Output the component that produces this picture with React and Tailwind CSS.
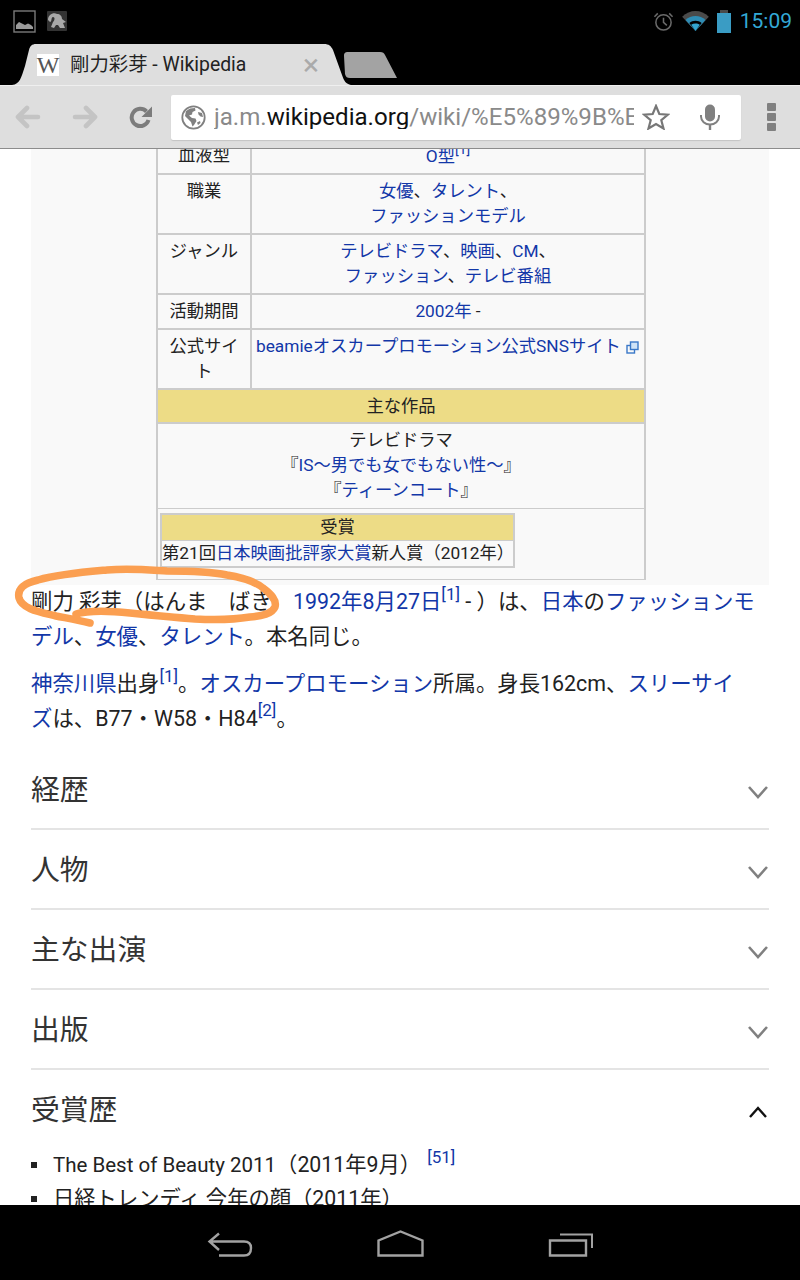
const FONT = '"Roboto", "Noto Sans CJK JP", sans-serif';

const L = ({ children }) => <span className="text-[#1237a8]">{children}</span>;

const Ref = ({ n }) => (
  <sup className="text-[#1237a8] text-[0.8em] leading-none align-[0.55em] relative top-0">[{n}]</sup>
);

const PictureIcon = () => (
  <svg width="23" height="23" viewBox="0 0 23 23" className="shrink-0">
    <rect x="1" y="1" width="21" height="21" fill="none" stroke="#7a7a7a" strokeWidth="1.4" />
    <path d="M3 19 L3 15 L6 12 L9 13.5 L12 15 L15 13.5 L18 15 L20 17 L20 19 Z" fill="#9a9a9a" />
  </svg>
);

const BlobIcon = () => (
  <svg width="20" height="20" viewBox="0 0 20 20" className="shrink-0">
    <rect width="20" height="20" rx="1" fill="#333333" />
    <path d="M1 9 C1 3 7 1 10 3 C13 3 15 5 15 8 L19 11 L16 12 L18 17 L13 17 L11 14 L9 14 L7 17 L4 16 L6 11 C8 9 8 6 6 6 C4 6 5 11 3 11 Z" fill="#a8a8a8" />
  </svg>
);

const AlarmIcon = () => (
  <svg width="21" height="21" viewBox="0 0 22 22" fill="none" stroke="#6a6a6a" strokeWidth="1.6" className="shrink-0">
    <circle cx="11" cy="12" r="8" />
    <path d="M11 7 V12 L14.5 15" />
    <path d="M1.5 6 L5 2.5 M20.5 6 L17 2.5" />
  </svg>
);

const WifiIcon = () => (
  <svg width="27" height="20" viewBox="0 0 28 21" className="shrink-0">
    <path d="M0 6 C8 -2 20 -2 28 6 L14 21 Z" fill="#4a4a4a" />
    <path d="M3.5 9.5 C9 4 19 4 24.500 9.500 L14 21 Z" fill="#2f8db5" />
    <path d="M7.500 12.500 C11 9.500 17 9.500 20.500 12.500 L14 21 Z" fill="#000000" />
    <path d="M9.500 14.500 C12 12.800 16 12.800 18.500 14.500 L14 21 Z" fill="#33a5d0" />
  </svg>
);

const BatteryIcon = () => (
  <div className="flex flex-col items-center shrink-0">
    <div className="w-[8px] h-[3px] bg-[#4a4a4a]" />
    <div className="w-[14px] h-[20px] bg-[#3a9cc4]" />
  </div>
);

const TabShape = () => (
  <svg className="absolute left-0 top-0" width="400" height="43" viewBox="0 0 400 43">
    <path d="M12 43 C20 42 21 36 25 24 L29 8 C30 4 32 2 36 2 L324 2 C329 2 331 4 333 8 L342 33 C344 39 346 42 351 43 Z" fill="#dedede" />
    <path d="M344 14 C344 11 345 10 348 10 L380 10 C383 10 384 11 385 13 L397 36 L350 36 C347 36 346 35 345 32 Z" fill="#a3a3a3" />
  </svg>
);

const Arrow = ({ flip, color }) => (
  <svg width="26" height="24" viewBox="0 0 26 24" fill="none" stroke={color} strokeWidth="4.6" strokeLinecap="round" strokeLinejoin="round" className={flip ? 'rotate-180' : ''}>
    <path d="M3 12 H23 M12 3 L3 12 L12 21" />
  </svg>
);

const ReloadIcon = () => (
  <svg width="24" height="24" viewBox="0 0 24 24" fill="none">
    <path d="M19.500 15 A8.600 8.600 0 1 1 17.500 6.500" stroke="#7c7c7c" strokeWidth="4" />
    <path d="M23 1.500 V12 H12.500 Z" fill="#7c7c7c" />
  </svg>
);

const GlobeIcon = () => (
  <svg width="25" height="25" viewBox="0 0 25 25" className="shrink-0">
    <circle cx="12.500" cy="12.500" r="11.200" fill="none" stroke="#808080" strokeWidth="1.8" />
    <path d="M5 6 L9 3.500 L14 3 L14.500 5.500 L11.500 7 L11 9.500 L8 10.500 L11 13 L14.500 13.500 L15.500 16 L13 20 L11.500 21.500 L10 17 L7 14 L4 11 Z" fill="#808080" />
    <path d="M17 7 L21 8 L22 12 L19.500 11.500 L17.500 9.500 Z M16 17.500 L19 16 L19.500 18 L17 20 Z" fill="#808080" />
  </svg>
);

const StarIcon = () => (
  <svg width="28" height="26" viewBox="0 0 28 26" fill="none" stroke="#777777" strokeWidth="2.200" strokeLinejoin="miter">
    <path d="M14 2 L17.300 10 L26 10.600 L19.300 16.200 L21.500 24.500 L14 20 L6.500 24.500 L8.700 16.200 L2 10.600 L10.700 10 Z" />
  </svg>
);

const MicIcon = () => (
  <svg width="20" height="26" viewBox="0 0 20 26" fill="none">
    <rect x="5" y="0.500" width="10" height="17" rx="5" fill="#808080" />
    <path d="M1 11 V12.500 C1 17 5 20.500 10 20.500 C15 20.500 19 17 19 12.500 V11" stroke="#808080" strokeWidth="2" />
    <path d="M10 20 V26" stroke="#808080" strokeWidth="2.400" />
  </svg>
);

const Chevron = ({ up }) => (
  <svg width="22" height="14" viewBox="0 0 22 14" fill="none" stroke={up ? '#111111' : '#808080'} strokeWidth={up ? 2.400 : 2.600} className="mt-[5px]">
    {up ? <path d="M3 12 L11 3 L19 12" /> : <path d="M2 2 L11 12 L20 2" />}
  </svg>
);

const Row = ({ label, h, children }) => (
  <div className={`flex border-b-2 border-[#cccccc] ${h}`}>
    <div className="w-[94px] shrink-0 border-r-2 border-[#cccccc] pt-[4px] text-center">{label}</div>
    <div className="flex-1 pt-[4px] text-center">{children}</div>
  </div>
);

const Infobox = () => (
  <div className="mx-[31px] bg-[#f9f9f9] pb-[5px] pl-[2px] flex justify-center">
    <div className="w-[490px] border-x-2 border-[#cccccc] text-[17.300px] leading-[25px] text-[#222222]">
      <div className="flex h-[26px] border-b-2 border-[#cccccc]">
        <div className="w-[94px] shrink-0 border-r-2 border-[#cccccc] text-center -mt-[6px]">血液型</div>
        <div className="flex-1 text-center -mt-[6px]"><L>O型</L><Ref n="1" /></div>
      </div>
      <Row label="職業" h="h-[60px]">
        <L>女優</L>、<L>タレント</L>、<br /><L>ファッションモデル</L>
      </Row>
      <Row label="ジャンル" h="h-[60px]">
        <L>テレビドラマ</L>、<L>映画</L>、<L>CM</L>、<br /><L>ファッション</L>、<L>テレビ番組</L>
      </Row>
      <Row label="活動期間" h="h-[35px]">
        <L>2002年</L> -
      </Row>
      <div className="flex h-[58px]">
        <div className="w-[94px] shrink-0 border-r-2 border-[#cccccc] pt-[4px] px-[8px] text-center">公式サイト</div>
        <div className="flex-1 pt-[4px] pl-[4px] flex items-start whitespace-nowrap">
          <L>beamieオスカープロモーション公式SNSサイト</L>
          <svg width="13" height="13" viewBox="0 0 13 13" fill="none" stroke="#3a78c8" strokeWidth="1.400" className="ml-[5px] mt-[7px] shrink-0">
            <rect x="1" y="4.500" width="7.500" height="7.500" />
            <rect x="4.500" y="1" width="7.500" height="7.500" fill="#cfe3f7" />
          </svg>
        </div>
      </div>
      <div className="h-[36px] bg-[#eddc86] border-y-2 border-[#cccccc] flex items-center justify-center">主な作品</div>
      <div className="h-[85px] border-b border-[#cccccc] pt-[4px] text-center">
        テレビドラマ<br />
        『<L>IS〜男でも女でもない性〜</L>』<br />
        『<L>ティーンコート</L>』
      </div>
      <div className="h-[71px] border-b border-[#cccccc] pt-[4px] pl-[2px]">
        <div className="w-[355px] h-[55px] border-2 border-[#cccccc]">
          <div className="h-[26px] bg-[#eddc86] border-b border-[#cccccc] flex items-center justify-center">受賞</div>
          <div className="h-[25px] whitespace-nowrap">
            第21回<L>日本映画批評家大賞</L>新人賞（2012年）
          </div>
        </div>
      </div>
    </div>
  </div>
);

const Section = ({ title }) => (
  <div className="h-[80px] border-b-2 border-[#e4e4e4] flex items-center justify-between">
    <span className="text-[28.8px] text-[#333333] leading-none mt-[2px]">{title}</span>
    <Chevron />
  </div>
);

const Scribble = () => (
  <svg className="absolute left-0 top-0 pointer-events-none" width="800" height="1056" viewBox="0 149 800 1056" fill="none">
    <path
      d="M90 623 C78 620 66 618 56 616 C40 612 22 609 19 598 C17 589 24 583 38 580 C60 574 85 572 107 570 C130 568 150 570 167 571 C190 571 212 572 227 575 C245 578 256 582 263 588 C271 594 277 600 275 607 C272 614 262 616 250 617 C232 620 215 620 195 619 C170 617 150 615 130 613 C110 611 90 610 76 614"
      stroke="#fb9f51"
      strokeWidth="7.500"
      strokeLinecap="round"
      strokeLinejoin="round"
    />
  </svg>
);

export default function App() {
  return (
    <div className="w-[800px] h-[1280px] flex flex-col overflow-hidden bg-white" style={{ fontFamily: FONT }}>
      {/* status bar */}
      <div className="h-[42px] bg-black flex items-center pl-[13px] pr-[8px] gap-[11px] shrink-0">
        <PictureIcon />
        <BlobIcon />
        <div className="ml-auto flex items-center gap-[8px]">
          <AlarmIcon />
          <WifiIcon />
          <BatteryIcon />
          <span className="text-[#33a9d6] text-[21px] leading-none ml-[1px]">15:09</span>
        </div>
      </div>

      {/* tabs */}
      <div className="h-[43px] bg-black relative shrink-0">
        <TabShape />
        <div className="absolute left-[37px] top-[12px] w-[282px] h-[22px] flex items-center">
          <div className="w-[22px] h-[22px] bg-white flex items-center justify-center text-[#555555] text-[24px] leading-none" style={{ fontFamily: '"Liberation Serif", serif' }}>W</div>
          <span className="ml-[11px] text-[19.400px] text-[#222222] leading-none whitespace-nowrap">剛力彩芽 - Wikipedia</span>
          <span className="ml-auto text-[#aaaaaa] text-[30px] leading-[22px]">×</span>
        </div>
      </div>

      {/* toolbar */}
      <div className="h-[64px] bg-[#dedede] border-b border-[#8c8c8c] border-t border-t-[#efefef] flex items-center shrink-0 pl-[15px]">
        <Arrow color="#c4c4c4" />
        <div className="ml-[31px]"><Arrow flip color="#c4c4c4" /></div>
        <div className="ml-[31px]"><ReloadIcon /></div>
        <div className="ml-[18px] w-[570px] h-[45px] bg-white rounded-[2px] shadow-[0_1px_1px_#c4c4c4] flex items-center pl-[10px]">
          <GlobeIcon />
          <div className="ml-[8px] w-[420px] overflow-hidden whitespace-nowrap text-[24.100px] leading-none text-[#8a8a8a]">
            ja.m.<span className="text-[#111111]">wikipedia.org</span>/wiki/%E5%89%9B%E5%8A%9B%E5%BD%A9
          </div>
          <div className="ml-[8px]"><StarIcon /></div>
          <div className="ml-[30px]"><MicIcon /></div>
        </div>
        <div className="ml-[26px] flex flex-col gap-[2px]">
          <div className="w-[9px] h-[8px] rounded-[1px] bg-[#808080]" />
          <div className="w-[9px] h-[8px] rounded-[1px] bg-[#808080]" />
          <div className="w-[9px] h-[8px] rounded-[1px] bg-[#808080]" />
        </div>
      </div>

      {/* page */}
      <div className="h-[1056px] relative overflow-hidden shrink-0">
        <Infobox />
        <div className="px-[31px] text-[21.400px] leading-[34.500px] text-[#222222] whitespace-nowrap">
          <p>
            剛力 彩芽（はんま　ばき　<L>1992年8月27日</L><Ref n="1" /> - ）は、<L>日本</L>の<L>ファッションモ</L><br />
            <L>デル</L>、<L>女優</L>、<L>タレント</L>。本名同じ。
          </p>
          <p className="mt-[13px]">
            <L>神奈川県</L>出身<Ref n="1" />。<L>オスカープロモーション</L>所属。身長162cm、<L>スリーサイ</L><br />
            <L>ズ</L>は、B77・W58・H84<Ref n="2" />。
          </p>
        </div>
        <div className="mx-[31px] mt-[14px]">
          <Section title="経歴" />
          <Section title="人物" />
          <Section title="主な出演" />
          <Section title="出版" />
          <div className="h-[78px] flex items-center justify-between">
            <span className="text-[28.8px] text-[#333333] leading-none mt-[2px]">受賞歴</span>
            <Chevron up />
          </div>
          <ul className="text-[21.300px] leading-[34px] text-[#222222] whitespace-nowrap">
            <li className="flex items-center">
              <span className="w-[6px] h-[6px] bg-[#222222] mr-[16px]" />
              <span><span className="text-[20.500px]">The Best of Beauty 2011</span>（2011年9月）<span className="ml-[6px]"><Ref n="51" /></span></span>
            </li>
            <li className="flex items-center">
              <span className="w-[6px] h-[6px] bg-[#222222] mr-[16px]" />
              <span>日経トレンディ 今年の顔（2011年）</span>
            </li>
          </ul>
        </div>
        <Scribble />
      </div>

      {/* nav bar */}
      <div className="flex-1 bg-black flex items-center justify-center">
        <svg width="400" height="40" viewBox="0 0 400 40" fill="none" stroke="#a2a2a2" strokeWidth="2.400">
          <path d="M19 10.500 L9.500 18.500 L19 27 M9.500 18.500 H44 C49 18.500 51 21 51 25 C51 30 49 32.500 44 32.500 H19" />
          <path d="M178.500 32.500 V17.500 L200.500 8.500 L222.500 17.500 V32.500 Z" />
          <path d="M350 17.500 H386 V32.500 H350 Z" />
          <path d="M360 11.500 H392 V25" strokeWidth="2" />
        </svg>
      </div>
    </div>
  );
}
